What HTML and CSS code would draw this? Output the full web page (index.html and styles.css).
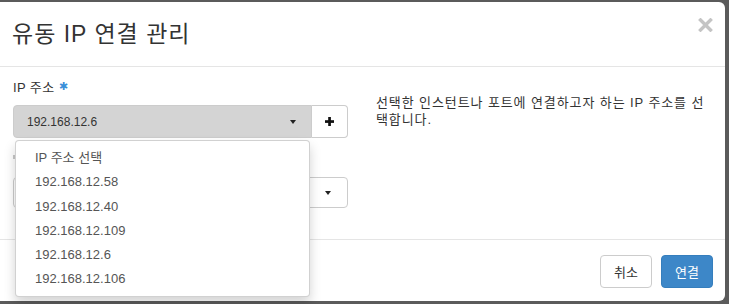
FILE: index.html
```html
<!DOCTYPE html>
<html lang="ko">
<head>
<meta charset="utf-8">
<link rel="stylesheet" href="styles.css">
</head>
<body>
<div class="modal">
  <div class="modal-header">
    <h4 class="modal-title">유동 IP 연결 관리</h4>
    <button class="close" aria-label="닫기">
      <svg width="15" height="14" viewBox="0 0 15 14"><path d="M2.5 2 L12.5 12 M12.5 2 L2.5 12" stroke="#c4c4c4" stroke-width="3.4" stroke-linecap="square"/></svg>
    </button>
  </div>
  <div class="modal-body">
    <div class="col-left">
      <div class="form-group">
        <label class="label">IP 주소 <span class="req">✱</span></label>
        <div class="input-group">
          <div class="select active">
            <span class="select-text">192.168.12.6</span>
            <span class="caret"></span>
          </div>
          <button class="addon">
            <svg width="9" height="9" viewBox="0 0 9 9"><rect x="3.2" y="0" width="2.7" height="9" fill="#111"/><rect x="0" y="3.2" width="9" height="2.7" fill="#111"/></svg>
          </button>
          <ul class="dropdown">
            <li>IP 주소 선택</li>
            <li>192.168.12.58</li>
            <li>192.168.12.40</li>
            <li>192.168.12.109</li>
            <li>192.168.12.6</li>
            <li>192.168.12.106</li>
          </ul>
        </div>
      </div>
      <div class="form-group second">
        <div class="label-spacer"><span class="peek"></span></div>
        <div class="select plain">
          <span class="select-text"></span>
          <span class="caret"></span>
        </div>
      </div>
    </div>
    <div class="col-right">
      <p class="help">선택한 인스턴트나 포트에 연결하고자 하는 IP 주소를 선택합니다.</p>
    </div>
  </div>
  <div class="modal-footer">
    <button class="btn btn-default">취소</button>
    <button class="btn btn-primary">연결</button>
  </div>
</div>
</body>
</html>
```
FILE: styles.css
```css
html, body {
  margin: 0;
  padding: 0;
}
body {
  background: #5b5b5b;
  font-family: "Liberation Sans", "Noto Sans CJK KR", sans-serif;
  color: #333;
  width: 729px;
  height: 304px;
  overflow: hidden;
}
.modal {
  margin-top: 2px;
  width: 725px;
  height: 299px;
  background: #fff;
  border-radius: 0 6px 6px 0;
  display: flex;
  flex-direction: column;
}
.modal-header {
  height: 64px;
  border-bottom: 1px solid #e5e5e5;
  display: flex;
  align-items: center;
  justify-content: space-between;
  padding: 0 12px 0 12px;
  flex-shrink: 0;
}
.modal-title {
  margin: 0;
  font-size: 23px;
  font-weight: normal;
  letter-spacing: 1px;
  color: #333;
  line-height: 1;
}
.close {
  border: 0;
  background: none;
  padding: 0;
  margin-top: -18px;
  width: 15px;
  height: 14px;
  display: flex;
}
.modal-body {
  height: 172px;
  display: flex;
  padding: 12px 0 0 13px;
  box-sizing: border-box;
  flex-shrink: 0;
}
.col-left {
  width: 335px;
}
.col-right {
  margin-left: 28px;
  width: 332px;
}
.help {
  margin: 15px 0 0 0;
  font-size: 13px;
  line-height: 17px;
  letter-spacing: 0.9px;
  color: #333;
}
.form-group {
  display: flex;
  flex-direction: column;
}
.form-group.second {
  margin-top: 10px;
}
.label {
  font-size: 13px;
  line-height: 18px;
  height: 18px;
  margin-bottom: 8px;
  color: #333;
  letter-spacing: 0.4px;
}
.label-spacer {
  height: 18px;
  margin-bottom: 11px;
  position: relative;
}
.peek {
  position: absolute;
  left: 0;
  top: 7px;
  width: 2px;
  height: 4px;
  background: #c8c8c8;
}
.req {
  color: #3a8fd9;
  font-size: 11px;
  position: relative;
  top: -2px;
}
.input-group {
  display: flex;
  position: relative;
  height: 33px;
}
.select {
  box-sizing: border-box;
  border: 1px solid #ccc;
  display: flex;
  align-items: center;
  justify-content: space-between;
}
.select.active {
  width: 299px;
  height: 33px;
  background: #d4d4d4;
  border-radius: 4px 0 0 4px;
  padding: 0 15px 0 13px;
}
.select-text {
  font-size: 12px;
  color: #333;
}
.caret {
  width: 0;
  height: 0;
  border-left: 3.5px solid transparent;
  border-right: 3.5px solid transparent;
  border-top: 4px solid #222;
}
.select.plain {
  width: 335px;
  height: 31px;
  background: #fff;
  border-radius: 4px;
  padding: 0 16px 0 13px;
}
.addon {
  width: 36px;
  height: 33px;
  box-sizing: border-box;
  border: 1px solid #ccc;
  border-left: 0;
  border-radius: 0 4px 4px 0;
  background: #fff;
  padding: 0;
  display: flex;
  align-items: center;
  justify-content: center;
}
.dropdown {
  position: absolute;
  top: 35px;
  left: 2px;
  width: 295px;
  height: 157px;
  box-sizing: border-box;
  margin: 0;
  padding: 5px 0 6px 0;
  list-style: none;
  background: #fff;
  border: 1px solid rgba(0,0,0,.18);
  border-radius: 4px;
  box-shadow: 0 6px 12px rgba(0,0,0,.175);
  z-index: 5;
}
.dropdown li {
  height: 24.3px;
  line-height: 24px;
  padding-left: 19px;
  font-size: 13px;
  color: #555;
}
.modal-footer {
  flex: 1;
  border-top: 1px solid #e5e5e5;
  display: flex;
  justify-content: flex-end;
  align-items: flex-start;
  padding: 15px 12px 0 0;
  gap: 9px;
}
.btn {
  width: 52px;
  height: 33px;
  border-radius: 4px;
  font-family: "Liberation Sans", "Noto Sans CJK KR", sans-serif;
  font-size: 13px;
  padding: 0;
  box-sizing: border-box;
}
.btn-default {
  background: #fff;
  border: 1px solid #ccc;
  color: #333;
}
.btn-primary {
  background: #3d87c8;
  border: 1px solid #357ebd;
  color: #fff;
}
```
